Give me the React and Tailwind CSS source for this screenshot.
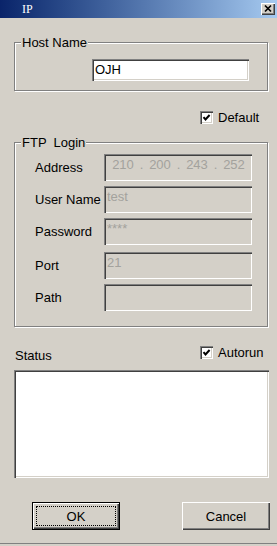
import React from 'react';

const sunken =
  'shadow-[inset_1px_1px_0_#808080,inset_2px_2px_0_#404040,inset_-1px_-1px_0_#ffffff,inset_-2px_-2px_0_#d4d0c8]';
const raised =
  'shadow-[inset_1px_1px_0_#ffffff,inset_-1px_-1px_0_#404040,inset_-2px_-2px_0_#808080]';
const etched = 'border border-[#808080] shadow-[inset_1px_1px_0_#ffffff,1px_1px_0_#ffffff]';

const CheckBox = ({ label }) => (
  <div className="flex items-center gap-[5px] h-[13px]">
    <div className={`w-[13px] h-[13px] bg-white flex items-center justify-center ${sunken}`}>
      <svg width="13" height="13" viewBox="0 0 13 13">
        <polyline points="3.5,6.2 5.5,8.4 9.6,4" fill="none" stroke="#000" strokeWidth="2" />
      </svg>
    </div>
    <span className="leading-[15px]">{label}</span>
  </div>
);

const GroupBox = ({ title, className, children }) => (
  <div className={`relative ${etched} ${className}`}>
    <span className="absolute left-[6px] -top-[8px] px-[1px] bg-[#d4d0c8] leading-[15px] whitespace-pre">{title}</span>
    {children}
  </div>
);

const FieldRow = ({ label, mt, children }) => (
  <div className={`flex items-center ${mt}`}>
    <span className="w-[89px] pl-[20px] leading-[15px] whitespace-nowrap">{label}</span>
    <div className={`w-[148px] h-[27px] bg-[#d4d0c8] text-[#a3a29d] pt-[3px] pl-[3px] leading-[15px] ${sunken}`}>
      {children}
    </div>
  </div>
);

const App = () => {
  const ip = ['210', '200', '243', '252'];

  return (
    <div className="w-[277px] h-[546px] bg-[#d4d0c8] flex flex-col font-['Liberation_Sans',Arial,sans-serif] text-[13px] text-black overflow-hidden">
      {/* Barra de título */}
      <div className="h-[18px] flex items-center bg-linear-to-r from-[#0a246a] to-[#a6caf0] shrink-0">
        <span className="pl-[22px] text-white text-[12px] leading-[14px] font-['Liberation_Serif',serif]">IP</span>
        <button className={`ml-auto mr-[2px] w-[14px] h-[12px] bg-[#d4d0c8] flex items-center justify-center ${raised}`}>
          <svg width="14" height="12" viewBox="0 0 14 12">
            <path d="M4 2.5 L10 8.5 M10 2.5 L4 8.5" stroke="#000" strokeWidth="1.7" />
          </svg>
        </button>
      </div>

      {/* Host Name */}
      <GroupBox title="Host Name" className="mt-[24px] ml-[14px] w-[254px] h-[49px] shrink-0">
        <div className="pl-[77px] pt-[16px]">
          <div className={`w-[157px] h-[22px] bg-white flex items-center pl-[3px] ${sunken}`}>OJH</div>
        </div>
      </GroupBox>

      <div className="mt-[20px] ml-[200px]">
        <CheckBox label="Default" />
      </div>

      {/* FTP Login */}
      <GroupBox title="FTP  Login" className="mt-[18px] ml-[14px] w-[254px] h-[185px] shrink-0">
        <FieldRow label="Address" mt="mt-[11px]">
          <div className="flex">
            {ip.map((n, i) => (
              <React.Fragment key={n + i}>
                <span className="w-[32px] text-center">{n}</span>
                {i < 3 && <span className="w-[5px] text-center">.</span>}
              </React.Fragment>
            ))}
          </div>
        </FieldRow>
        <FieldRow label="User Name" mt="mt-[5px]">test</FieldRow>
        <FieldRow label="Password" mt="mt-[5px]">****</FieldRow>
        <FieldRow label="Port" mt="mt-[7px]">21</FieldRow>
        <FieldRow label="Path" mt="mt-[5px]"></FieldRow>
      </GroupBox>

      {/* Status */}
      <div className="mt-[19px] flex h-[16px] shrink-0">
        <span className="w-[200px] pl-[15px] pt-[2px] leading-[15px]">Status</span>
        <CheckBox label="Autorun" />
      </div>
      <div className={`mt-[8px] ml-[14px] w-[255px] h-[108px] bg-white shrink-0 ${sunken}`}></div>

      {/* Botões */}
      <div className="mt-[24px] flex shrink-0">
        <button className={`ml-[32px] w-[88px] h-[28px] border border-black p-[3px] flex ${raised}`}>
          <div className="flex-1 border border-dotted border-black flex items-center justify-center leading-[15px]">
            OK
          </div>
        </button>
        <button className={`ml-[62px] w-[88px] h-[28px] flex items-center justify-center leading-[15px] ${raised}`}>
          Cancel
        </button>
      </div>

      <div className="mt-auto mb-[2px] h-[1px] bg-[#808080] shrink-0"></div>
    </div>
  );
};

export default App;
